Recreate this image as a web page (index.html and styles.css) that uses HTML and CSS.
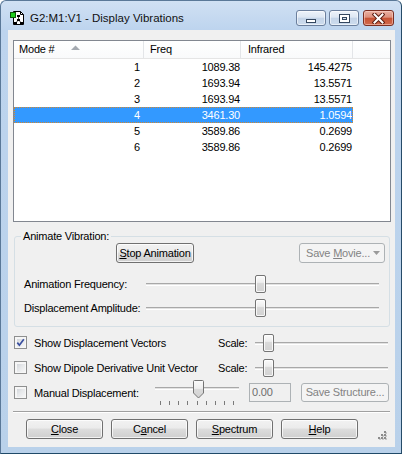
FILE: index.html
```html
<!DOCTYPE html>
<html>
<head>
<meta charset="utf-8">
<title>Display Vibrations</title>
<link rel="stylesheet" href="styles.css">
</head>
<body>
<div class="window">
  <div class="titlebar">
    <svg class="appicon" width="16" height="16" viewBox="0 0 16 16">
      <path d="M3.5 1.5h7l3 3v10h-10z" fill="#fff" stroke="#000"/>
      <path d="M10.5 1.5v3h3" fill="none" stroke="#000"/>
      <path d="M8.5 6v4M8.5 10l-3 3M8.5 10l3 3" stroke="#444" fill="none"/>
      <rect x="7" y="5" width="3" height="2" fill="#000"/>
      <rect x="7" y="9" width="3" height="2" fill="#000"/>
      <rect x="4" y="12" width="3" height="2" fill="#000"/>
      <rect x="10" y="12" width="3" height="2" fill="#000"/>
      <rect x="0.5" y="2.5" width="5" height="5" fill="#1fcf1f" stroke="#0a5a0a"/>
    </svg>
    <span class="title">G2:M1:V1 - Display Vibrations</span>
    <div class="caption">
      <div class="cbtn min">
        <svg width="12" height="6" viewBox="0 0 12 6"><rect x="1.5" y="1.5" width="9" height="3" fill="#fff" stroke="#34475f"/></svg>
      </div>
      <div class="cbtn max">
        <svg width="11" height="9" viewBox="0 0 11 9"><rect x="0.5" y="0.5" width="10" height="8" fill="#fff" stroke="#34475f"/><rect x="3.5" y="3.5" width="4" height="2" fill="#d9e3ef" stroke="#34475f"/></svg>
      </div>
      <div class="cbtn close">
        <svg width="13" height="11" viewBox="0 0 13 11"><path d="M2.5 1.5L10.5 9.5M10.5 1.5L2.5 9.5" stroke="#5b1d12" stroke-width="4" stroke-linecap="square"/><path d="M2.5 1.5L10.5 9.5M10.5 1.5L2.5 9.5" stroke="#fff" stroke-width="2" stroke-linecap="square"/></svg>
      </div>
    </div>
  </div>

  <div class="client">
    <div class="listview">
      <div class="lv-header">
        <div class="hcol c1">Mode #<svg class="sort" width="9" height="5" viewBox="0 0 9 5"><path d="M0 5L4.5 0.5L9 5z" fill="#a4a9b0"/></svg></div>
        <div class="hcol c2">Freq</div>
        <div class="hcol c3">Infrared</div>
        <div class="hcol c4"></div>
      </div>
      <div class="lv-row"><span class="c1">1</span><span class="c2">1089.38</span><span class="c3">145.4275</span></div>
      <div class="lv-row"><span class="c1">2</span><span class="c2">1693.94</span><span class="c3">13.5571</span></div>
      <div class="lv-row"><span class="c1">3</span><span class="c2">1693.94</span><span class="c3">13.5571</span></div>
      <div class="lv-row selected"><span class="c1">4</span><span class="c2">3461.30</span><span class="c3">1.0594</span></div>
      <div class="lv-row"><span class="c1">5</span><span class="c2">3589.86</span><span class="c3">0.2699</span></div>
      <div class="lv-row"><span class="c1">6</span><span class="c2">3589.86</span><span class="c3">0.2699</span></div>
    </div>

    <fieldset class="group">
      <legend>Animate Vibration:</legend>
      <div class="anim-buttons">
        <div class="btn stop"><span><u>S</u>top Animation</span></div>
        <div class="btn disabled movie"><span>Save <u>M</u>ovie...</span><svg class="drop" width="7" height="4" viewBox="0 0 7 4"><path d="M0 0h7L3.5 4z" fill="#9a9a9a"/></svg></div>
      </div>
      <div class="slider-row first">
        <span class="slabel">Animation Frequency:</span>
        <div class="slider wide"><div class="thumb" style="margin-left:109px"></div></div>
      </div>
      <div class="slider-row">
        <span class="slabel">Displacement Amplitude:</span>
        <div class="slider wide"><div class="thumb" style="margin-left:109px"></div></div>
      </div>
    </fieldset>

    <div class="opt-row first">
      <span class="cb checked"><svg width="11" height="11" viewBox="0 0 11 11"><path d="M2.3 5.6L4.4 8.2L8.8 2.2" fill="none" stroke="#3a4f9f" stroke-width="1.7"/></svg></span>
      <span class="optlabel">Show Displacement Vectors</span>
      <span class="scale">Scale:</span>
      <div class="slider narrow"><div class="thumb" style="margin-left:8px"></div></div>
    </div>
    <div class="opt-row">
      <span class="cb"></span>
      <span class="optlabel">Show Dipole Derivative Unit Vector</span>
      <span class="scale">Scale:</span>
      <div class="slider narrow"><div class="thumb" style="margin-left:8px"></div></div>
    </div>
    <div class="opt-row">
      <span class="cb"></span>
      <span class="optlabel short">Manual Displacement:</span>
      <div class="mslider">
        <div class="mtrack">
          <svg class="mthumb" style="margin-left:38px" width="11" height="19" viewBox="0 0 11 19">
            <defs><linearGradient id="tg" x1="0" y1="0" x2="0" y2="1"><stop offset="0" stop-color="#fbfbfb"/><stop offset="0.45" stop-color="#eeeeee"/><stop offset="0.5" stop-color="#dadada"/><stop offset="1" stop-color="#d2d2d2"/></linearGradient></defs>
            <path d="M1.5 0.5h8a1 1 0 0 1 1 1v11.5l-5 5l-5 -5v-11.5a1 1 0 0 1 1 -1z" fill="url(#tg)" stroke="#747474"/>
          </svg>
        </div>
        <div class="ticks"><i></i><i></i><i></i><i></i><i></i><i></i><i></i><i></i><i></i></div>
      </div>
      <div class="textbox">0.00</div>
      <div class="btn disabled structure"><span>Save Structure...</span></div>
    </div>

    <div class="separator"></div>

    <div class="bottom-buttons">
      <div class="btn"><span><u>C</u>lose</span></div>
      <div class="btn"><span>C<u>a</u>ncel</span></div>
      <div class="btn"><span><u>S</u>pectrum</span></div>
      <div class="btn"><span><u>H</u>elp</span></div>
      <svg class="grip" width="9" height="9" viewBox="0 0 9 9">
        <g fill="#c8c8c8"><rect x="7" y="1" width="2" height="2"/><rect x="4" y="4" width="2" height="2"/><rect x="7" y="4" width="2" height="2"/><rect x="1" y="7" width="2" height="2"/><rect x="4" y="7" width="2" height="2"/><rect x="7" y="7" width="2" height="2"/></g>
        <g fill="#8c8c8c"><rect x="6" y="0" width="2" height="2"/><rect x="3" y="3" width="2" height="2"/><rect x="6" y="3" width="2" height="2"/><rect x="0" y="6" width="2" height="2"/><rect x="3" y="6" width="2" height="2"/><rect x="6" y="6" width="2" height="2"/></g>
      </svg>
    </div>
  </div>
</div>
</body>
</html>
```

FILE: styles.css
```css
* { box-sizing: border-box; }
html, body { margin: 0; padding: 0; }
body {
  width: 402px;
  height: 454px;
  overflow: hidden;
  background: #ffffff;
  font-family: "Liberation Sans", Arial, sans-serif;
  font-size: 11px;
  letter-spacing: -0.2px;
  color: #000;
}

.window {
  width: 402px;
  height: 454px;
  border: 1px solid #5a7898;
  border-right-color: #264b68;
  border-bottom-color: #1f4a68;
  border-radius: 6px 6px 0 0;
  background: linear-gradient(#d0e0f3 0px, #bdd4ee 29px, #b9d1ea 100%);
  display: flex;
  flex-direction: column;
}

/* ---------- title bar ---------- */
.titlebar {
  height: 29px;
  display: flex;
  align-items: flex-start;
  padding-left: 9px;
}
.appicon { margin-top: 9px; flex: none; }
.title {
  margin-top: 10px;
  margin-left: 4px;
  font-size: 11.5px;
  letter-spacing: 0;
  line-height: 15px;
  color: #111;
}
.caption {
  margin-left: auto;
  margin-right: 7px;
  margin-top: 9px;
  display: flex;
  gap: 3px;
}
.cbtn {
  width: 30px;
  height: 16px;
  border: 1px solid #6b7f9d;
  border-radius: 3px;
  background: linear-gradient(#eef3fa 0%, #dde7f3 45%, #c4d4e8 50%, #cddcee 100%);
  box-shadow: inset 0 0 0 1px rgba(255,255,255,0.55);
  display: flex;
  align-items: center;
  justify-content: center;
}
.cbtn.min { align-items: flex-end; padding-bottom: 1px; }
.cbtn.min svg, .cbtn.max svg, .cbtn.close svg { display: block; }
.cbtn.close {
  width: 31px;
  margin-left: 1px;
  border-color: #7a2e22;
  background: linear-gradient(#eab0a2 0%, #dc8f7c 45%, #c75234 50%, #d16a4d 100%);
  box-shadow: inset 0 0 0 1px rgba(255,220,210,0.5);
}

/* ---------- client ---------- */
.client {
  margin: 0 6px 0 7px;
  height: 417px;
  background: #f0f0f0;
}

/* ---------- list view ---------- */
.listview {
  margin: 10px 0 0 5px;
  width: 378px;
  height: 182px;
  border: 1px solid #828790;
  background: #fff;
}
.lv-header {
  display: flex;
  height: 18px;
  border-bottom: 1px solid #e5e5e5;
  background: linear-gradient(#ffffff, #f9fafb);
}
.hcol {
  display: flex;
  align-items: center;
  padding-left: 5px;
  border-right: 1px solid #e3e5e8;
  line-height: 13px;
}
.hcol.c1 { width: 130px; }
.hcol.c2 { width: 97px; padding-left: 6px; }
.hcol.c3 { width: 112px; padding-left: 7px; }
.hcol.c4 { flex: 1; border-right: none; }
.sort { margin-left: 16px; margin-top: -4px; }

.lv-row {
  display: flex;
  width: 339px;
  height: 16px;
  line-height: 16px;
}
.lv-row span { text-align: right; }
.lv-row .c1 { width: 130px; padding-right: 4px; }
.lv-row .c2 { width: 97px; padding-right: 1px; }
.lv-row .c3 { width: 112px; padding-right: 1px; }
.lv-row.selected {
  background: #3399ff;
  color: #fff;
  outline: 1px dotted #d3872e;
  outline-offset: -1px;
}

/* ---------- group box ---------- */
.group {
  margin: 8px 0 0 6px;
  padding: 0;
  width: 376px;
  height: 97px;
  border: 1px solid #d5dfe5;
  border-radius: 3px;
}
.group legend {
  margin-left: 6px;
  padding: 0 2px;
  line-height: 13px;
}
.anim-buttons {
  display: flex;
  height: 20px;
  padding-left: 101px;
  padding-right: 4px;
}
.btn {
  height: 20px;
  border: 1px solid #707070;
  border-radius: 3px;
  background: linear-gradient(#f2f2f2 0%, #ebebeb 45%, #dddddd 50%, #cfcfcf 100%);
  box-shadow: inset 0 0 0 1px rgba(255,255,255,0.75);
  display: flex;
  align-items: center;
  justify-content: center;
  white-space: nowrap;
  line-height: 13px;
  flex: none;
}
.btn u { text-decoration-thickness: 1px; text-underline-offset: 1px; }
.btn.disabled {
  border-color: #adb2b5;
  background: #f4f4f4;
  box-shadow: none;
  color: #838383;
}
.btn.stop { width: 78px; }
.btn.movie { width: 86px; margin-left: auto; padding-left: 6px; justify-content: flex-start; }
.drop { margin-left: 3px; }

.slider-row {
  display: flex;
  align-items: center;
  height: 18px;
  margin-top: 6px;
  padding-left: 9px;
}
.slider-row.first { margin-top: 12px; }
.slabel { width: 122px; white-space: nowrap; }

.slider {
  height: 18px;
  flex: none;
  background: linear-gradient(to bottom,
    transparent 8px, #a8a8a8 8px, #a8a8a8 9px,
    #e2e2e2 9px, #e2e2e2 10px, #ffffff 10px, #ffffff 11px, transparent 11px);
}
.slider.wide { width: 233px; }
.slider.narrow { width: 133px; }
.thumb {
  width: 11px;
  height: 18px;
  border: 1px solid #747474;
  border-radius: 2px;
  background: linear-gradient(#fbfbfb 0%, #eeeeee 40%, #dadada 45%, #d2d2d2 100%);
  box-shadow: inset 0 0 0 1px rgba(255,255,255,0.8);
}

/* ---------- option rows ---------- */
.opt-row {
  display: flex;
  align-items: center;
  height: 19px;
  margin-top: 6px;
  padding-left: 6px;
}
.cb {
  width: 13px;
  height: 13px;
  flex: none;
  border: 1px solid #8e8f8f;
  padding: 0;
  background: linear-gradient(135deg, #c9cdd3 0%, #e6e8ea 50%, #fafafa 100%);
  box-shadow: inset 0 0 0 1px #f6f6f6, inset 1px 1px 0 1px #f6f6f6;
  margin-right: 7px;
}
.cb svg { display: block; margin: 0; }
.optlabel { width: 184px; white-space: nowrap; flex: none; }
.optlabel.short { width: 121px; }
.scale { width: 37px; flex: none; }

.mslider {
  width: 84px;
  flex: none;
  align-self: flex-start;
  margin-top: -4px;
  height: 28px;
  display: flex;
  flex-direction: column;
}
.mtrack {
  height: 18px;
  background: linear-gradient(to bottom,
    transparent 8px, #a8a8a8 8px, #a8a8a8 9px,
    #e2e2e2 9px, #e2e2e2 10px, #ffffff 10px, #ffffff 11px, transparent 11px);
}
.mthumb { display: block; margin-top: 1px; }
.ticks {
  display: flex;
  justify-content: space-between;
  padding: 0 5px;
  margin-top: 4px;
  height: 4px;
}
.ticks i { width: 1px; height: 4px; background: #7a7a7a; }

.textbox {
  width: 42px;
  height: 19px;
  margin-left: 10px;
  border: 1px solid #adb2b5;
  background: #f0f0f0;
  color: #6d6d6d;
  padding-left: 2px;
  line-height: 17px;
  flex: none;
}
.btn.structure { width: 88px; margin-left: 10px; height: 19px; }

/* ---------- bottom ---------- */
.separator {
  margin: 9px 0 0 5px;
  width: 377px;
  height: 2px;
  border-top: 1px solid #a0a0a0;
  border-bottom: 1px solid #ffffff;
}
.bottom-buttons {
  display: flex;
  gap: 8px;
  margin-top: 6px;
  padding-left: 18px;
  height: 20px;
}
.bottom-buttons .btn { width: 77px; }
.grip {
  margin-left: auto;
  margin-right: 8px;
  align-self: flex-end;
  margin-bottom: -1px;
  display: block;
}
```
